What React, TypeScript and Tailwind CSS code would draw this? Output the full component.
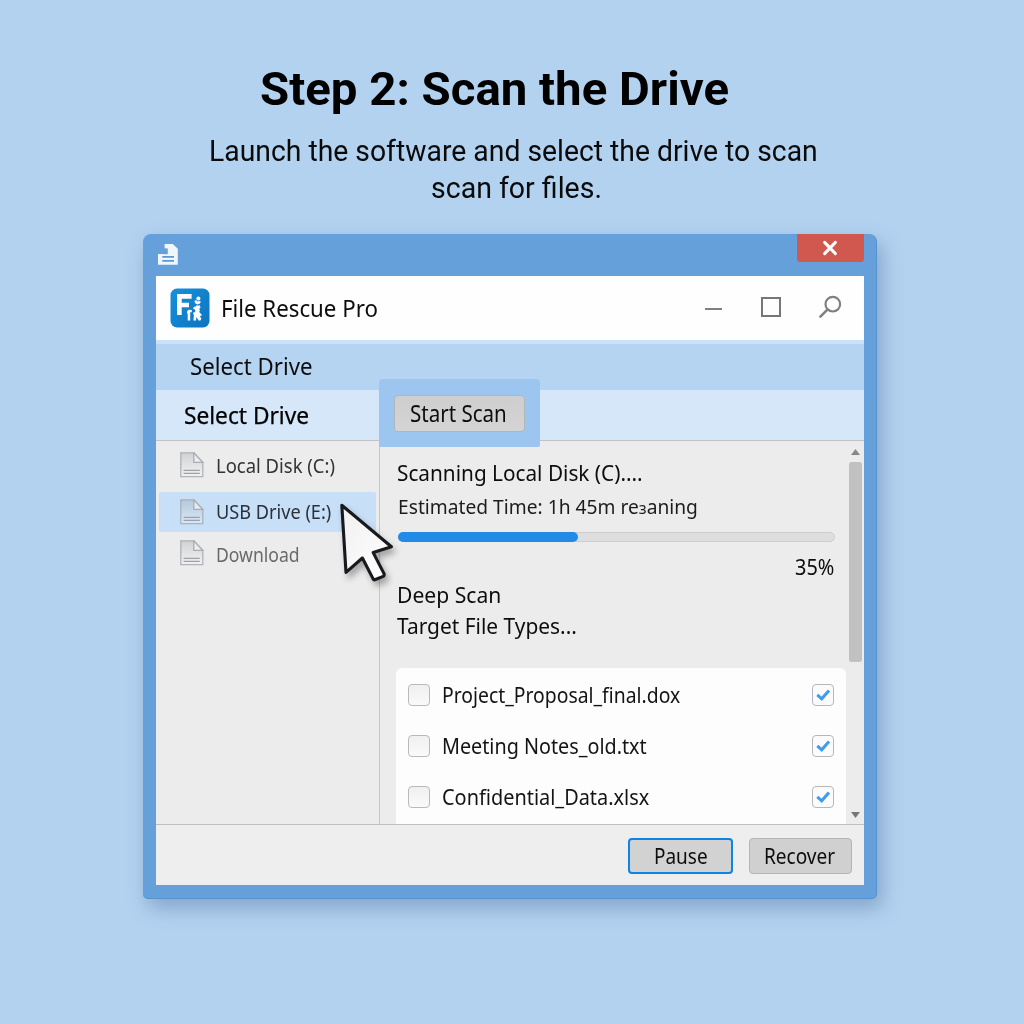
import type { ReactNode } from 'react';

function Label({ children, className }: { children: ReactNode; className: string }) {
  return <div className={`h-6 w-max origin-left whitespace-nowrap leading-6 ${className}`}>{children}</div>;
}

function PageIcon({ className = '' }: { className?: string }) {
  return (
    <svg width="24" height="26" viewBox="0 0 24 26" className={`shrink-0 ${className}`}>
      <defs>
        <linearGradient id="page" x1="0" y1="0" x2="0" y2="1">
          <stop offset="0" stopColor="#8a929b" stopOpacity="0.3" />
          <stop offset="1" stopColor="#ffffff" stopOpacity="0.25" />
        </linearGradient>
      </defs>
      <path d="M.8.8H13.8L22.8 10.4V24.6H.8Z" fill="url(#page)" stroke="#a9adb2" strokeOpacity="0.9" strokeWidth="1.3" />
      <path d="M13.8 .8V10.4H22.8Z" fill="#f4f5f6" fillOpacity="0.7" stroke="#a9adb2" strokeWidth="1.3" />
      <path d="M3.6 18.4H19.8M3.6 21.4H19.8" stroke="#9ea2a7" strokeWidth="1.4" />
    </svg>
  );
}

function DocumentGlyph() {
  return (
    <svg width="21" height="22" viewBox="0 0 21 22">
      <path d="M6.6 0H14.8L19.8 4.8V20.8H0V9.9H9.6V4.4L6.6 4.2Z" fill="#f1f6fd" />
      <path d="M9.6 4.6V9.9H5.4" fill="none" stroke="#65a0da" strokeOpacity="0.6" strokeWidth="0.8" />
      <path d="M4.3 12.9H16M4.3 16.8H16" stroke="#5b98d6" strokeWidth="1.8" />
    </svg>
  );
}

function AppLogo() {
  return (
    <svg width="40" height="40" viewBox="0 0 40 40">
      <defs>
        <linearGradient id="logo" x1="0" y1="0" x2="1" y2="1">
          <stop offset="0" stopColor="#1590dc" />
          <stop offset="1" stopColor="#0d74c0" />
        </linearGradient>
      </defs>
      <rect x=".5" y=".5" width="39" height="39" rx="6.5" fill="url(#logo)" />
      <path d="M9.4 27V8.4H21.6M9.4 17H19" fill="none" stroke="#fff" strokeWidth="4.6" />
      <g fill="#fff">
        <circle cx="28.4" cy="10.6" r="2" />
        <path d="M24.4 12.8l2-.6 1.6 1.5 1-.9 2 .9-1.5 2-2 .8-2.4-1.2Z" />
        <path d="M24 18.8l2-.4.7-1.3 1.5.7 1.7-.6.6 2.6-1.5 1.1 1 1.2-.8 2 2.6 2.6-.6 1.2-1.5-.2 1.7 3-1 1.9h-1.8l-2.2-3.6-.4 3.6h-2.6l.5-6.1-1-.6.6-1.4 1.6-.4.2-2.4-2.3-.9Z" />
        <path d="M17 23.6l1.6-1.8 3.2.2v2.2h-1.6v8.2h-2.5v-6.8H17Z" />
      </g>
    </svg>
  );
}

function Cursor() {
  return (
    <svg
      width="64"
      height="90"
      viewBox="0 0 64 90"
      className="absolute left-[183px] top-[222px] z-20 drop-shadow-[3px_5px_3px_rgba(0,0,0,0.3)]"
    >
      <defs>
        <linearGradient id="arrow" x1="0" y1="0" x2="1" y2="1">
          <stop offset="0" stopColor="#f0f0f0" />
          <stop offset="1" stopColor="#ffffff" />
        </linearGradient>
      </defs>
      <path
        d="M2.8 7.2L52.4 48.8L34.2 54.6L45 75.6Q45.6 77.4 44.2 78.4L35.8 81.8Q34.6 82 34 80.6L23.4 60L7 74.4Z"
        fill="url(#arrow)"
        stroke="#17191c"
        strokeWidth="3.1"
        strokeLinejoin="round"
      />
    </svg>
  );
}

const files = [
  { name: 'Project_Proposal_final.dox', scale: 'scale-x-[0.9]' },
  { name: 'Meeting Notes_old.txt', scale: 'scale-x-[0.919]' },
  { name: 'Confidential_Data.xlsx', scale: 'scale-x-[0.926]' },
];

function FileRow({ name, scale }: { name: string; scale: string }) {
  return (
    <div className="flex h-[51.3px] items-center pl-3 pr-[12px]">
      <div className="size-[22px] rounded-[4px] border-[1.5px] border-[#b9b9b9] bg-linear-to-b from-[#f0f0f0] to-[#fafafa]" />
      <Label className={`ml-[12px] text-[21.5px] text-[#141414] ${scale}`}>{name}</Label>
      <div className="ml-auto flex size-[22px] shrink-0 items-center justify-center rounded-[4px] border-[1.5px] border-[#b4b8bc] bg-[#fbfbfc]">
        <svg width="16" height="14" viewBox="0 0 16 14">
          <path d="M2.3 6.9L6.7 10.8L14 2.6" fill="none" stroke="#3d9bf0" strokeWidth="3" />
        </svg>
      </div>
    </div>
  );
}

export default function App() {
  return (
    <main className="h-[1024px] w-[1024px] overflow-hidden bg-[#b3d2f0] font-['Noto_Sans','Open_Sans',sans-serif] text-[#0d0d0d]">
      <header className="h-[234px] pt-[62px] font-[Roboto,sans-serif] text-black">
        <h1 className="ml-[260px] w-max origin-left scale-x-[1.03] whitespace-nowrap text-[46px] font-bold leading-[54px]">
          Step 2: Scan the Drive
        </h1>
        <p className="ml-[208.5px] mt-[17px] w-max origin-left scale-x-[0.977] whitespace-nowrap text-[29px] leading-[37px] text-[#0a0a0a]">
          Launch the software and select the drive to scan
        </p>
        <p className="ml-[430.5px] w-max origin-left scale-x-[0.983] whitespace-nowrap text-[29px] leading-[37px] text-[#0a0a0a]">
          scan for files.
        </p>
      </header>

      <section className="ml-[143px] flex h-[665px] w-[734px] flex-col rounded-t-[8px] rounded-b-[5px] border-b border-r border-[#5592d0] bg-[#65a0da] pb-[13px] pl-[13px] pr-3 shadow-[5px_9px_20px_rgba(75,110,155,0.45)]">
        <div className="flex h-[42px] shrink-0 items-start">
          <div className="ml-[2px] mt-[9.5px]">
            <DocumentGlyph />
          </div>
          <button className="ml-auto flex h-[28px] w-[67px] items-center justify-center rounded-b-[3px] bg-[#d1584f] pb-[1px] pr-[2px]">
            <svg width="16" height="16" viewBox="0 0 16 16">
              <path d="M2.6 2.4L13.4 13.6M13.4 2.4L2.6 13.6" stroke="#fff" strokeWidth="3" strokeLinecap="round" />
            </svg>
          </button>
        </div>

        <div className="relative flex min-h-0 flex-1 flex-col bg-[#ececec]">
          <div className="flex h-16 shrink-0 items-center bg-[#fefefe] pl-[14px] pr-[22px]">
            <AppLogo />
            <Label className="ml-[11px] scale-x-[0.947] text-[23.5px]">File Rescue Pro</Label>
            <div className="ml-auto flex items-center pb-[2px] text-[#7a7a7a]">
              <div className="mr-[39px] mt-[3px] h-[2px] w-[17px] bg-[#808080]" />
              <div className="mr-[37px] size-[20px] border-2 border-[#777]" />
              <svg width="24" height="24" viewBox="0 0 24 24" fill="none" stroke="#808080" strokeWidth="2.2">
                <circle cx="14.8" cy="9.2" r="7.3" />
                <path d="M9.4 14.6L2.4 21.6" strokeWidth="2.6" strokeLinecap="round" />
              </svg>
            </div>
          </div>

          <div className="h-[50px] shrink-0 border-t-4 border-[#cbe1f7] bg-[#b5d4f2] pl-[34px] pt-[10px]">
            <Label className="scale-x-[0.967] text-[23px]">Select Drive</Label>
          </div>
          <div className="h-[51px] shrink-0 border-b border-[#bfc3c7] bg-[#d5e7f9] pl-[27.5px] pt-[13px]">
            <Label className="scale-x-[0.987] text-[23px] text-black [-webkit-text-stroke:0.25px_black]">Select Drive</Label>
          </div>

          <div className="absolute left-[223px] top-[103px] z-10 flex h-[68px] w-[160.5px] items-center rounded-t-[4px] rounded-br-[2px] bg-[#9cc6ef] pl-[15px]">
            <button className="h-[37px] w-[131px] rounded-[4px] border border-[#b3b7bb] bg-linear-to-b from-[#cecece] to-[#d4d4d4] pl-[14.5px]">
              <Label className="scale-x-[0.893] text-[23px]">Start Scan</Label>
            </button>
          </div>
          <Cursor />

          <div className="flex min-h-0 flex-1">
            <nav className="w-[224px] shrink-0 border-r border-[#c6c8ca]">
              <div className="flex h-[51px] pl-6 pt-[11px]">
                <PageIcon />
                <Label className="ml-[12px] mt-[1px] scale-x-[0.9] text-[20.5px] text-[#333]">Local Disk (C:)</Label>
              </div>
              <div className="ml-[3px] mr-[3px] flex h-[40px] rounded-[2px] bg-[#c7dff7] pl-[21px] pt-[6.5px]">
                <PageIcon />
                <Label className="ml-[12px] mt-[0.5px] scale-x-[0.886] text-[20.5px] text-[#2b3138]">USB Drive (E:)</Label>
              </div>
              <div className="flex h-[42px] pl-6 pt-[8px]">
                <PageIcon />
                <Label className="ml-[12px] mt-[2px] scale-x-[0.857] text-[20.5px] text-[#6a6a6a]">Download</Label>
              </div>
            </nav>

            <div className="flex min-w-0 flex-1 flex-col pl-4">
              <Label className="ml-px mt-[19px] scale-x-[0.944] text-[22px]">Scanning Local Disk (C)....</Label>
              <Label className="ml-[1.5px] mt-[10px] scale-x-[0.937] text-[20.5px] text-[#1c1c1c]">
                Estimated Time: 1h 45m re<span className="inline-block text-[17px]">ɜ</span>aning
              </Label>
              <div className="ml-[1.5px] mt-[13.5px] h-[10px] w-[437px] shrink-0 rounded-full border border-[#cdcdcd] bg-[#dedede]">
                <div className="-ml-px -mt-px h-[10px] w-[180px] rounded-full bg-[#228be6]" />
              </div>
              <div className="mt-[13.5px] flex w-[438px] justify-end">
                <Label className="-mr-[3px] scale-x-[0.926] text-[21.5px]">35%</Label>
              </div>
              <Label className="ml-[1px] mt-[3px] scale-x-[0.96] text-[22px]">Deep Scan</Label>
              <Label className="ml-px mt-[6.5px] scale-x-[0.95] text-[22px]">Target File Types...</Label>
              <div className="mt-[31px] min-h-0 flex-1 overflow-hidden rounded-t-[6px] bg-[#fdfdfd] pt-[1.5px]">
                {files.map((f) => (
                  <FileRow key={f.name} {...f} />
                ))}
              </div>
            </div>

            <div className="flex w-[18px] shrink-0 flex-col items-center pt-[8px]">
              <svg width="9" height="6" viewBox="0 0 9 6">
                <path d="M4.5 0L9 6H0Z" fill="#878787" />
              </svg>
              <div className="mt-[7px] h-[200px] w-[13px] shrink-0 rounded-[2.5px] bg-[#c1c1c1]" />
              <svg width="9" height="6" viewBox="0 0 9 6" className="mb-[6px] mt-auto">
                <path d="M0 0H9L4.5 6Z" fill="#777" />
              </svg>
            </div>
          </div>

          <footer className="flex h-[61px] shrink-0 items-start justify-end border-t border-[#bdc0c3] bg-[#eeeeee] pr-3 pt-[13px]">
            <button className="mr-4 h-[36px] w-[105px] rounded-[4px] border-2 border-[#0d84e3] bg-[#d2d2d2] pl-[23.5px]">
              <Label className="scale-x-[0.903] text-[21px]">Pause</Label>
            </button>
            <button className="h-[36px] w-[103px] rounded-[4px] border border-[#b5b5b5] bg-[#d0d0d0] pl-[14px]">
              <Label className="scale-x-[0.907] text-[21px]">Recover</Label>
            </button>
          </footer>
        </div>
      </section>
    </main>
  );
}
